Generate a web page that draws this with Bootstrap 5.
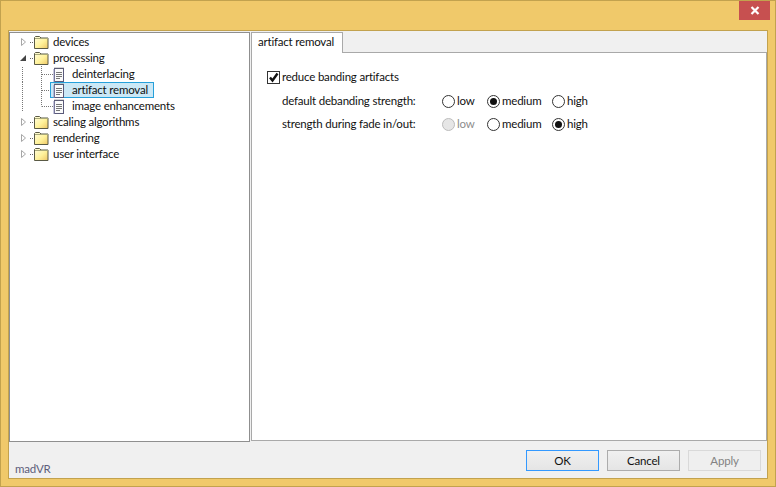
<!DOCTYPE html>
<html lang="en"><head><meta charset="utf-8"><title>madVR</title>
<link href="https://cdn.jsdelivr.net/npm/bootstrap@5.3.0/dist/css/bootstrap.min.css" rel="stylesheet">
<style>
html,body{margin:0;height:487px;overflow:hidden;background:#f0c96a}
body{font-family:Lato,"Liberation Sans",sans-serif;font-size:11.5px;letter-spacing:-.2px;color:#111;line-height:16px}
.win{width:776px;height:487px;border:1px solid #c2a24e;background:#f0c96a;padding:0 7px 7px;display:flex;flex-direction:column}
.tbar{height:29px;flex:none;display:flex;justify-content:flex-end;margin-right:-2px}
.xbtn{width:31px;height:19px;background:#c75050;display:flex;align-items:center;justify-content:center;border:0;padding:0}
.client{flex:1;background:#f0f0f0;border:1px solid #c2a24e;min-height:0;display:flex;flex-direction:column}
.panes{height:410px;flex:none;padding-top:1px;display:flex;gap:1px}
.treep{width:241px;flex:none;background:#fff;border:1px solid #8f8f8f;padding:1px 0 0 10px;height:410px}
.trow{height:16px;display:flex;align-items:center;white-space:nowrap}
.trow svg{flex:none;display:block}
.doclab{padding-left:7px}
.sel{background:#cbe8f6;border:1px solid #26a0da;height:16px;display:flex;align-items:center;padding:0 5px 0 2px;margin-left:0}
.rightp{flex:1;display:flex;flex-direction:column;min-width:0}
.tabstrip{height:20px;flex:none;display:flex;align-items:flex-end}
.tabh{height:21px;width:92px;background:#fff;border:1px solid #a9a9a9;border-bottom:0;padding:1px 0 0 6px;margin-bottom:-1px;position:relative;z-index:1;white-space:nowrap}
.tabbody{flex:1;background:#fff;border:1px solid #a9a9a9;padding:16px 0 0 15px}
.opt1{display:flex;align-items:center;height:16px;gap:2px}
.chk{width:13px;height:13px;border:1px solid #333;background:#fff;display:block;flex:none}
.optr{display:flex;align-items:center;height:16px;padding-left:15px}
.optl{width:160px;flex:none}
.rd{display:flex;align-items:center;gap:2px;flex:none}
.rw1{width:45px}.rw2{width:65px}
.rad{width:13px;height:13px;border:1px solid #333;border-radius:50%;background:#fff;display:flex;align-items:center;justify-content:center;flex:none}
.rad.on::after{content:"";width:7px;height:7px;border-radius:50%;background:#111}
.rad.off{background:#e6e6e6;border-color:#bcbcbc}
.muted2{color:#8d8d8d}
.foot{flex:1;display:flex;align-items:flex-start;padding:9px 6px 0 0;justify-content:flex-end;gap:8px}
.brand{margin-right:auto;padding:11px 0 0 6px;color:#5d5d7a;font-size:11.5px}
.wbtn{width:73px;height:21px;background:linear-gradient(#f0f0f0,#e5e5e5);border:1px solid #acacac;font-size:11.5px;line-height:17px;padding:0;color:#111;border-radius:0;letter-spacing:-.2px}
.wbtn.def{border-color:#3399ff}
.wbtn.dis{background:#efefef;border-color:#d9d9d9;color:#838383}
</style></head><body>
<svg width="0" height="0" class="d-block position-absolute"><defs>
<linearGradient id="fg" x1="0" y1="0" x2="1" y2="1"><stop offset="0" stop-color="#fffde0"/><stop offset=".55" stop-color="#fff29a"/><stop offset="1" stop-color="#eec766"/></linearGradient>
<symbol id="fold" viewBox="0 0 16 14"><path d="M1.500 13.500V2.500l1-1h4l1.500 1.500h7v10.500z" fill="url(#fg)" stroke="#5a5a45"/><path d="M2 3.500h13" stroke="#a8a878"/></symbol>
<symbol id="doc" viewBox="0 0 12 15"><rect x="1.500" y="1.500" width="9" height="13" fill="#fbfbfb" stroke="#5a5a7a"/><path d="M2 .5v2M4 .5v2M6 .5v2M8 .5v2M10 .5v2" stroke="#666" stroke-dasharray="1 1"/><path d="M3 5.500h6M3 7.500h6M3 9.500h6M3 11.500h4" stroke="#777"/><path d="M1 2v13" stroke="#8f8fb8"/></symbol>
<symbol id="exp" viewBox="0 0 13 16"><path d="M1.500 4.500v7l4-3.500z" fill="#fff" stroke="#a6a6a6"/><path d="M10 8.500h1M12 8.500h1" stroke="#666"/></symbol>
<symbol id="opn" viewBox="0 0 13 16"><path d="M6 5v6H0z" fill="#444"/><path d="M10 8.500h1M12 8.500h1" stroke="#666"/></symbol>
</defs></svg>
<div class="win">
<div class="tbar"><button class="xbtn" aria-label="Close"><svg width="10" height="9" viewBox="0 0 10 9"><path d="M1.500 1l7 7M8.500 1l-7 7" stroke="#fff" stroke-width="2.200"/></svg></button></div>
<div class="client">
<div class="panes">
<div class="treep">
<div class="trow"><svg width="13" height="16"><use href="#exp"/></svg><svg width="16" height="14" class="me-1"><use href="#fold"/></svg><span>devices</span></div>
<div class="trow"><svg width="13" height="16"><use href="#opn"/></svg><svg width="16" height="14" class="me-1"><use href="#fold"/></svg><span>processing</span></div>
<div class="trow"><svg width="33" height="16"><path d="M2.500 1v16M21.500 0v16M22 8.500h11" stroke="#777" stroke-dasharray="1 1"/></svg><svg width="12" height="15"><use href="#doc"/></svg><span class="doclab">deinterlacing</span></div>
<div class="trow"><svg width="30" height="16"><path d="M2.500 0v16M21.500 0v16M22 8.500h8" stroke="#777" stroke-dasharray="1 1"/></svg><div class="sel"><svg width="12" height="15"><use href="#doc"/></svg><span class="doclab">artifact removal</span></div></div>
<div class="trow"><svg width="33" height="16"><path d="M2.500 0v14M21.500 0v8.500M22 8.500h11" stroke="#777" stroke-dasharray="1 1"/></svg><svg width="12" height="15"><use href="#doc"/></svg><span class="doclab">image enhancements</span></div>
<div class="trow"><svg width="13" height="16"><use href="#exp"/></svg><svg width="16" height="14" class="me-1"><use href="#fold"/></svg><span>scaling algorithms</span></div>
<div class="trow"><svg width="13" height="16"><use href="#exp"/></svg><svg width="16" height="14" class="me-1"><use href="#fold"/></svg><span>rendering</span></div>
<div class="trow"><svg width="13" height="16"><use href="#exp"/></svg><svg width="16" height="14" class="me-1"><use href="#fold"/></svg><span>user interface</span></div>
</div>
<div class="rightp">
<div class="tabstrip"><div class="tabh">artifact removal</div></div>
<div class="tabbody">
<div class="opt1"><span class="chk"><svg width="11" height="11" viewBox="0 0 11 11" class="d-block"><path d="M2 5.500l2.500 3L9.500 1.500" fill="none" stroke="#111" stroke-width="2.400"/></svg></span><span>reduce banding artifacts</span></div>
<div class="optr mt-2"><span class="optl">default debanding strength:</span>
<span class="rd rw1"><span class="rad"></span><span>low</span></span><span class="rd rw2"><span class="rad on"></span><span>medium</span></span><span class="rd"><span class="rad"></span><span>high</span></span></div>
<div class="optr" style="margin-top:7px"><span class="optl">strength during fade in/out:</span>
<span class="rd rw1"><span class="rad off"></span><span class="muted2">low</span></span><span class="rd rw2"><span class="rad"></span><span>medium</span></span><span class="rd"><span class="rad on"></span><span>high</span></span></div>
</div>
</div>
</div>
<div class="foot"><div class="brand">madVR</div><button class="wbtn def">OK</button><button class="wbtn">Cancel</button><button class="wbtn dis">Apply</button></div>
</div>
</div>
<script src="https://cdn.jsdelivr.net/npm/bootstrap@5.3.0/dist/js/bootstrap.bundle.min.js"></script>
</body></html>
